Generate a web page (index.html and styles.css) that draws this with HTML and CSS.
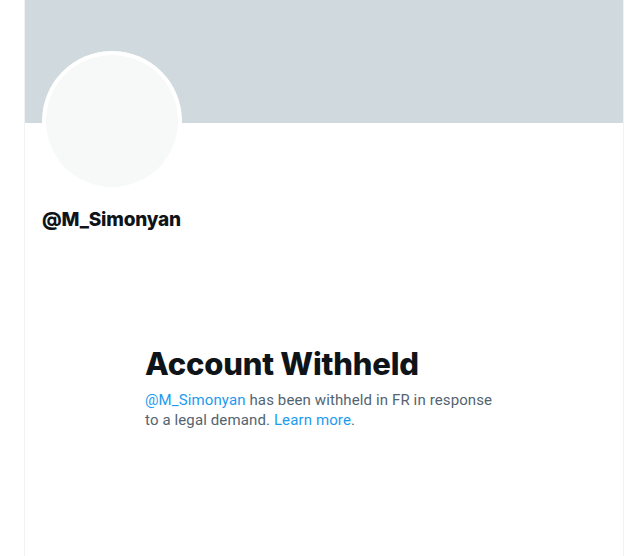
FILE: index.html
```html
<!DOCTYPE html>
<html lang="en">
<head>
<meta charset="utf-8">
<title>@M_Simonyan</title>
<link rel="stylesheet" href="styles.css">
</head>
<body>
<main class="column">
  <div class="banner"></div>
  <div class="profile-head">
    <div class="avatar"><div class="avatar-inner"></div></div>
    <div class="handle">@M_Simonyan</div>
  </div>
  <section class="empty">
    <h1 class="empty-title">Account Withheld</h1>
    <p class="empty-text"><a class="link" href="#">@M_Simonyan</a> has been withheld in FR in response to a legal demand. <a class="link" href="#">Learn more</a>.</p>
  </section>
</main>
</body>
</html>
```
FILE: styles.css
```css
html, body {
  margin: 0;
  padding: 0;
  background: #ffffff;
  height: 100%;
}
body {
  font-family: Roboto, "Noto Sans", "Liberation Sans", sans-serif;
  color: #0f1419;
}
.column {
  box-sizing: border-box;
  width: 600px;
  margin-left: 24px;
  min-height: 100%;
  border-left: 1px solid #eff3f4;
  border-right: 1px solid #eff3f4;
}
.banner {
  height: 123px;
  background: #cfd9de;
}
.profile-head {
  padding: 0 16px 0 17px;
}
.avatar {
  width: 140px;
  height: 140px;
  margin-top: -72px;
  box-sizing: border-box;
  border-radius: 50%;
  background: #ffffff;
  padding: 4px;
}
.avatar-inner {
  width: 100%;
  height: 100%;
  border-radius: 50%;
  background: #f7f9f9;
}
.handle {
  margin-top: 17px;
  font-family: Inter, Roboto, sans-serif;
  font-weight: 800;
  font-size: 19px;
  line-height: 24px;
  letter-spacing: -0.2px;
}
.empty {
  width: 358px;
  margin: 114px auto 0;
}
.empty-title {
  margin: 0;
  font-family: Inter, Roboto, sans-serif;
  font-weight: 800;
  font-size: 31px;
  line-height: 36px;
  letter-spacing: -0.2px;
}
.empty-text {
  margin: 8px 0 0;
  font-size: 15px;
  line-height: 20px;
  letter-spacing: 0.12px;
  color: #536471;
}
.link {
  color: #1d9bf0;
  text-decoration: none;
}
```
